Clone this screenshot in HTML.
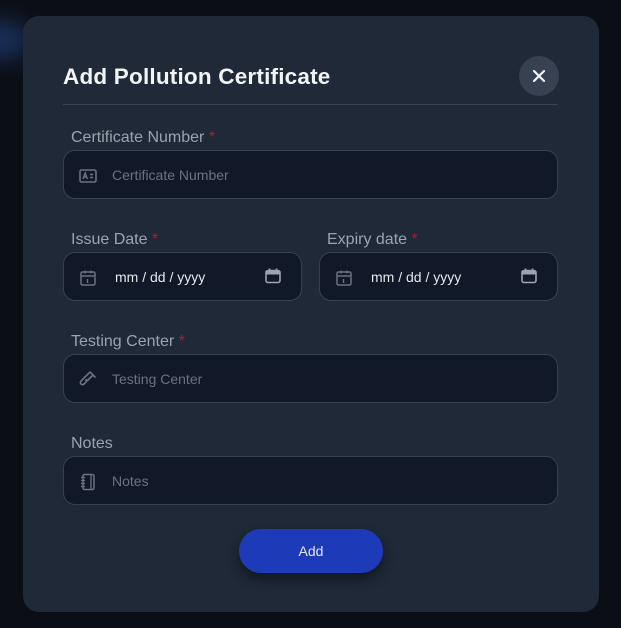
<!DOCTYPE html>
<html><head><style>
*{box-sizing:border-box;margin:0;padding:0}
body{width:621px;height:628px;background:#0b0e15;font-family:"Liberation Sans",sans-serif;position:relative;overflow:hidden}
.glow{position:absolute;left:-30px;top:20px;width:60px;height:40px;border-radius:50%;background:#1e3a6e;filter:blur(12px);opacity:.8}
.modal{position:absolute;left:23px;top:16px;width:576px;height:596px;background:#1f2937;border-radius:16px}
.title{position:absolute;left:40px;top:48px;font-size:22.5px;font-weight:bold;color:#f3f4f6;letter-spacing:.2px}
.hr{position:absolute;left:40px;top:88px;width:495px;height:1px;background:#3b4556}
.close{position:absolute;left:496px;top:40px;width:40px;height:40px;border-radius:50%;background:#374151}
.lbl{position:absolute;font-size:16px;color:#9ca3af}
.lbl b{color:#b91c1c;font-weight:normal}
.in{position:absolute;height:49px;background:#111827;border:1px solid #374151;border-radius:12px}
.ph{position:absolute;left:48px;top:16px;font-size:14px;color:#6b7280}
.dt{position:absolute;left:51px;top:16px;font-size:14px;color:#e5e7eb}
.ic{position:absolute;left:14px;top:15px}
.btn{position:absolute;left:216px;top:513px;width:144px;height:44px;border-radius:22px;background:#1d3bb8;color:#e5e7eb;font-size:14px;text-align:center;line-height:44px;box-shadow:0 6px 12px rgba(0,0,0,.45)}
</style></head><body>
<div class="glow"></div>
<div class="modal">
<div class="title">Add Pollution Certificate</div>
<div class="close"><svg width="40" height="40"><path d="M15 15L25 25M25 15L15 25" stroke="#f3f4f6" stroke-width="2.2" stroke-linecap="round"/></svg></div>
<div class="hr"></div>

<div class="lbl" style="left:48px;top:113px">Certificate Number <b>*</b></div>
<div class="in" style="left:40px;top:134px;width:495px">
<svg class="ic" width="20" height="20" viewBox="0 0 20 20"><rect x="2" y="4" width="16" height="12" rx="1.5" fill="none" stroke="#6b7280" stroke-width="1.6"/><path d="M5 13l2.2-6 2.2 6M5.8 11h2.8M12 8.5h3M12 11.5h3" stroke="#6b7280" stroke-width="1.4" fill="none"/></svg>
<div class="ph">Certificate Number</div></div>

<div class="lbl" style="left:48px;top:215px">Issue Date <b>*</b></div>
<div class="in" style="left:40px;top:236px;width:239px">
<svg class="ic" width="20" height="20" viewBox="0 0 20 20"><rect x="3" y="4" width="14" height="13" rx="1.5" fill="none" stroke="#6b7280" stroke-width="1.5"/><path d="M3 8h14M7 2.5v3M13 2.5v3M9.5 11v4" stroke="#6b7280" stroke-width="1.4"/></svg>
<div class="dt">mm / dd / yyyy</div>
<svg style="position:absolute;left:200px;top:14px" width="18" height="18" viewBox="0 0 18 18"><rect x="2" y="3.5" width="14" height="12" rx="2" fill="none" stroke="#9ca3af" stroke-width="1.6"/><rect x="2" y="3.5" width="14" height="4" fill="#9ca3af"/><path d="M5.5 1.5v3M12.5 1.5v3" stroke="#9ca3af" stroke-width="1.6"/></svg>
</div>

<div class="lbl" style="left:304px;top:215px">Expiry date <b>*</b></div>
<div class="in" style="left:296px;top:236px;width:239px">
<svg class="ic" width="20" height="20" viewBox="0 0 20 20"><rect x="3" y="4" width="14" height="13" rx="1.5" fill="none" stroke="#6b7280" stroke-width="1.5"/><path d="M3 8h14M7 2.5v3M13 2.5v3M9.5 11v4" stroke="#6b7280" stroke-width="1.4"/></svg>
<div class="dt">mm / dd / yyyy</div>
<svg style="position:absolute;left:200px;top:14px" width="18" height="18" viewBox="0 0 18 18"><rect x="2" y="3.5" width="14" height="12" rx="2" fill="none" stroke="#9ca3af" stroke-width="1.6"/><rect x="2" y="3.5" width="14" height="4" fill="#9ca3af"/><path d="M5.5 1.5v3M12.5 1.5v3" stroke="#9ca3af" stroke-width="1.6"/></svg>
</div>

<div class="lbl" style="left:48px;top:317px">Testing Center <b>*</b></div>
<div class="in" style="left:40px;top:338px;width:495px">
<svg class="ic" width="20" height="20" viewBox="0 0 20 20"><path d="M13 3l4 4M15 5L6 14a2 2 0 01-3-3l9-9" fill="none" stroke="#6b7280" stroke-width="1.6" stroke-linecap="round"/><path d="M7 10h4" stroke="#6b7280" stroke-width="1.4"/></svg>
<div class="ph">Testing Center</div></div>

<div class="lbl" style="left:48px;top:419px">Notes</div>
<div class="in" style="left:40px;top:440px;width:495px">
<svg class="ic" width="20" height="20" viewBox="0 0 20 20"><rect x="5" y="2.5" width="11" height="15" rx="1.5" fill="none" stroke="#6b7280" stroke-width="1.5"/><path d="M3 5.5h4M3 8.5h4M3 11.5h4M3 14.5h4M13 3v14" stroke="#6b7280" stroke-width="1.3"/></svg>
<div class="ph">Notes</div></div>

<div class="btn">Add</div>
</div>
</body></html>
